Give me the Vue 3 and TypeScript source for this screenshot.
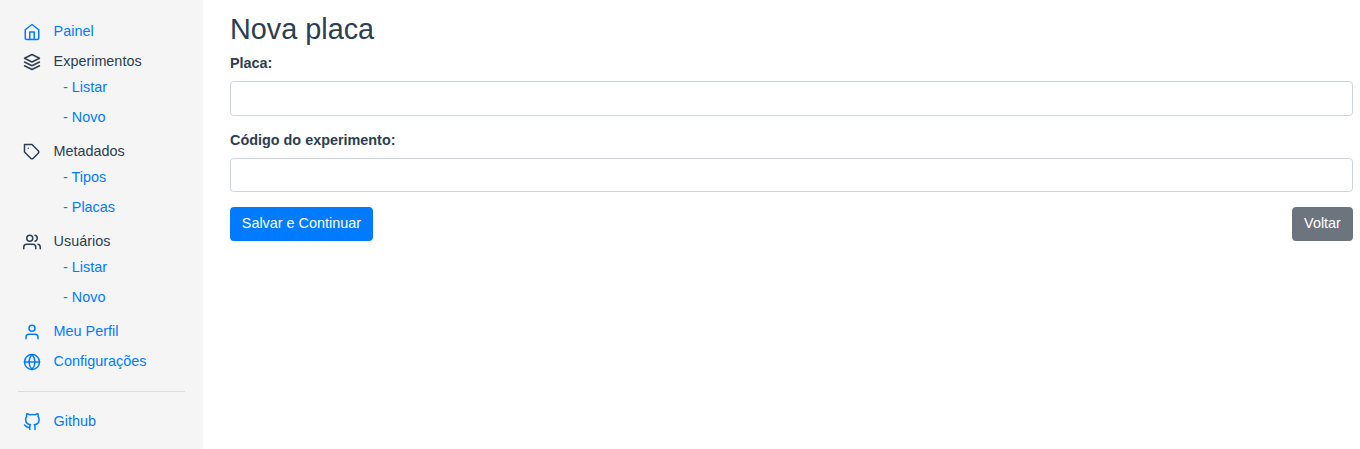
<script setup lang="ts">
import { ref } from 'vue'

type IconName = 'home' | 'layers' | 'tag' | 'users' | 'user' | 'globe' | 'github'

interface MenuItem {
  label: string
  icon: IconName
  children?: string[]
}

const icons: Record<IconName, string[]> = {
  home: ['M3 9l9-7 9 7v11a2 2 0 0 1-2 2H5a2 2 0 0 1-2-2z', 'M9 22V12h6v10'],
  layers: ['M12 2L2 7l10 5 10-5z', 'M2 17l10 5 10-5', 'M2 12l10 5 10-5'],
  tag: ['M20.59 13.41l-7.17 7.17a2 2 0 0 1-2.83 0L2 12V2h10l8.59 8.59a2 2 0 0 1 0 2.82z', 'M7 7h.01'],
  users: [
    'M17 21v-2a4 4 0 0 0-4-4H5a4 4 0 0 0-4 4v2',
    'M9 3a4 4 0 1 0 0 8a4 4 0 1 0 0-8z',
    'M23 21v-2a4 4 0 0 0-3-3.87',
    'M16 3.13a4 4 0 0 1 0 7.75',
  ],
  user: ['M20 21v-2a4 4 0 0 0-4-4H8a4 4 0 0 0-4 4v2', 'M12 3a4 4 0 1 0 0 8a4 4 0 1 0 0-8z'],
  globe: [
    'M12 2a10 10 0 1 0 0 20a10 10 0 1 0 0-20z',
    'M2 12h20',
    'M12 2a15.3 15.3 0 0 1 4 10 15.3 15.3 0 0 1-4 10 15.3 15.3 0 0 1-4-10 15.3 15.3 0 0 1 4-10z',
  ],
  github: [
    'M9 19c-5 1.5-5-2.5-7-3m14 6v-3.87a3.37 3.37 0 0 0-.94-2.61c3.14-.35 6.44-1.54 6.44-7A5.44 5.44 0 0 0 20 4.77 5.07 5.07 0 0 0 19.91 1S18.73.65 16 2.48a13.38 13.38 0 0 0-7 0C6.27.65 5.09 1 5.09 1A5.07 5.07 0 0 0 5 4.77a5.44 5.44 0 0 0-1.5 3.78c0 5.42 3.3 6.61 6.44 7A3.37 3.37 0 0 0 9 18.13V22',
  ],
}

const menu: MenuItem[] = [
  { label: 'Painel', icon: 'home' },
  { label: 'Experimentos', icon: 'layers', children: ['Listar', 'Novo'] },
  { label: 'Metadados', icon: 'tag', children: ['Tipos', 'Placas'] },
  { label: 'Usuários', icon: 'users', children: ['Listar', 'Novo'] },
  { label: 'Meu Perfil', icon: 'user' },
  { label: 'Configurações', icon: 'globe' },
]

const external: MenuItem[] = [{ label: 'Github', icon: 'github' }]

const placa = ref('')
const codigo = ref('')
</script>

<template>
  <div class="layout">
    <nav class="sidebar">
      <template v-for="(group, g) in [menu, external]" :key="g">
        <hr v-if="g > 0" class="divider" />
        <ul class="menu">
          <li v-for="item in group" :key="item.label">
            <component
              :is="item.children ? 'span' : 'a'"
              class="entry"
              :class="{ link: !item.children }"
              :href="item.children ? undefined : '#'"
            >
              <svg class="icon" viewBox="0 0 24 24" aria-hidden="true">
                <path v-for="d in icons[item.icon]" :key="d" :d="d" />
              </svg>
              <span class="label">{{ item.label }}</span>
            </component>
            <ul v-if="item.children" class="submenu">
              <li v-for="child in item.children" :key="child">
                <a class="link" href="#">- {{ child }}</a>
              </li>
            </ul>
          </li>
        </ul>
      </template>
    </nav>

    <main class="content">
      <h2 class="title">Nova placa</h2>
      <form @submit.prevent>
        <div class="field">
          <label for="placa">Placa:</label>
          <input id="placa" v-model="placa" type="text" />
        </div>
        <div class="field">
          <label for="codigo">Código do experimento:</label>
          <input id="codigo" v-model="codigo" type="text" />
        </div>
        <div class="actions">
          <button type="submit" class="btn primary">Salvar e Continuar</button>
          <button type="button" class="btn secondary">Voltar</button>
        </div>
      </form>
    </main>
  </div>
</template>

<style>
html {
  font-size: 14.4px;
}
body {
  margin: 0;
  background: #fff;
}
</style>

<style scoped>
.layout,
.layout * {
  box-sizing: border-box;
}
.layout {
  display: flex;
  height: 100vh;
  overflow: hidden;
  font-family: 'Liberation Sans', Arial, Helvetica, sans-serif;
  font-size: 1rem;
  line-height: 1.5;
  color: #2c3e50;
}
.sidebar {
  flex: 0 0 203px;
  padding: 16px 18px 0;
  background: #f5f5f5;
}
.menu,
.submenu {
  margin: 0;
  padding: 0;
  list-style: none;
}
.entry {
  display: flex;
  align-items: center;
  gap: 12.6px;
  height: 30px;
  padding-left: 5px;
}
.label {
  padding-top: 2px;
}
.link {
  color: #007bff;
  text-decoration: none;
}
.icon {
  flex: none;
  width: 18px;
  height: 18px;
  margin-top: 2px;
  overflow: visible;
  fill: none;
  stroke: currentColor;
  stroke-width: 2;
  stroke-linecap: round;
  stroke-linejoin: round;
}
.submenu {
  margin-top: -4px;
  padding: 0 0 4px 45px;
}
.submenu li {
  height: 30px;
  line-height: 30px;
}
.divider {
  height: 1px;
  margin: 15px 0 14px;
  border: 0;
  background: #dcdcdc;
}
.content {
  flex: 1;
  padding: 12px 7px 0 27px;
}
.title {
  margin: 0 0 6.6px;
  font-size: 2rem;
  font-weight: 400;
  line-height: 1.2;
}
.field {
  margin-bottom: 1rem;
}
.field label {
  display: block;
  margin-bottom: 6.4px;
  font-weight: 700;
}
.field input {
  display: block;
  width: 100%;
  height: calc(1.5em + 0.75rem + 2px);
  padding: 0.375rem 0.75rem;
  border: 1px solid #ced4da;
  border-radius: 0.25rem;
  background: #fff;
  color: #495057;
  font: inherit;
  outline: 0;
}
.actions {
  display: flex;
  justify-content: space-between;
}
.btn {
  padding: 0.375rem 0.75rem;
  border: 1px solid;
  border-radius: 0.25rem;
  color: #fff;
  font: inherit;
}
.primary {
  border-color: #007bff;
  background: #007bff;
}
.secondary {
  min-width: 61px;
  border-color: #6c757d;
  background: #6c757d;
}
</style>
